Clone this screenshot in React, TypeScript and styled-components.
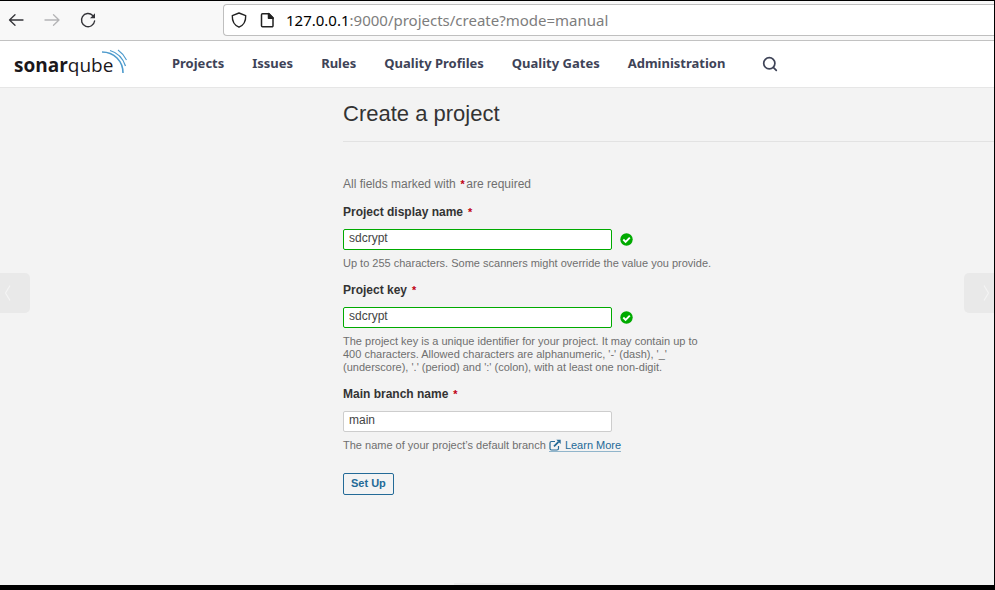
import React from "react";
import styled, { createGlobalStyle, css } from "styled-components";

const GlobalStyle = createGlobalStyle`
  *, *::before, *::after { box-sizing: border-box; }
  body {
    margin: 0;
    background: #f3f3f3;
    color: #333;
    font-family: "Liberation Sans", Arial, Helvetica, sans-serif;
    font-size: 12px;
  }
`;

const Window = styled.div`
  position: relative;
  display: flex;
  flex-direction: column;
  min-height: 100vh;
  border: 0 solid #000;
  border-width: 1px 1px 5px 0;
  overflow: hidden;
`;

const BrowserBar = styled.div`
  display: flex;
  align-items: center;
  height: 40px;
  padding-bottom: 1px;
  background: #f8f8f8;
  border-bottom: 1px solid #c2c2c2;
`;

const BrowserControls = styled.div`
  display: flex;
  align-items: center;
  gap: 16px;
  width: 223px;
  padding-left: 6px;
  flex-shrink: 0;
`;

const BrowserButton = styled.button`
  display: flex;
  padding: 0;
  border: 0;
  background: none;
  color: #333338;

  &:disabled {
    color: #b4b4b6;
  }
`;

const AddressBar = styled.div`
  display: flex;
  align-items: center;
  flex: 1;
  height: 32px;
  padding-left: 6px;
  gap: 8px;
  border: 1px solid #bfbfbf;
  border-right: 0;
  border-radius: 4px 0 0 4px;
  background: #fff;
  color: #222;
`;

const Address = styled.span`
  font-family: "Noto Sans", sans-serif;
  font-size: 15px;
  line-height: 20px;
  color: #7d7d7d;
`;

const Host = styled.span`
  color: #000;
`;

const Header = styled.header`
  display: flex;
  align-items: center;
  height: 47px;
  padding-left: 14px;
  background: #fff;
  border-bottom: 1px solid #e6e6e6;
`;

const LogoLink = styled.a`
  display: flex;
  width: 158px;
  flex-shrink: 0;
  text-decoration: none;
`;

const Nav = styled.nav`
  display: flex;
  gap: 28px;
  padding-bottom: 3px;
`;

const NavLink = styled.a`
  color: #3e4357;
  font: bold 13px/20px "Noto Sans", sans-serif;
  text-decoration: none;
  white-space: nowrap;
`;

const SearchButton = styled.button`
  display: flex;
  margin-left: 36px;
  padding: 0;
  border: 0;
  background: none;
  color: #3e4357;
`;

const Main = styled.main`
  flex: 1;
  padding: 11px 0 24px 343px;
`;

const TitleBar = styled.div`
  height: 43px;
  border-bottom: 1px solid #e2e2e2;
`;

const Title = styled.h1`
  margin: 0;
  font-size: 22px;
  font-weight: 400;
  line-height: 30px;
`;

const Form = styled.form`
  max-width: 374px;
  padding-top: 34px;
`;

const Note = styled.p`
  margin: 0 0 12px;
  color: #6f6f6f;
  line-height: 16px;
`;

const Asterisk = styled.em`
  padding: 0 2px 0 1px;
  color: #c00012;
  font-size: 11px;
  font-style: italic;
  font-weight: 700;
`;

const Field = styled.div`
  margin-bottom: 12px;
`;

const Label = styled.label`
  display: block;
  margin-bottom: 9px;
  font-weight: 700;
  line-height: 16px;
`;

const InputRow = styled.div`
  display: flex;
  align-items: center;
  gap: 8px;
  margin-bottom: 7px;
`;

const TextInput = styled.input<{ $valid?: boolean }>`
  width: 269px;
  height: 21px;
  padding: 0 5px 3px;
  border: 1px solid ${({ $valid }) => ($valid ? "#00aa00" : "#cdcdcd")};
  border-radius: 2px;
  background: #fff;
  color: #444;
  font: 12px "Liberation Sans", Arial, sans-serif;
  outline: 0;
`;

const Hint = styled.p`
  margin: 0;
  color: #6f6f6f;
  font-size: 11px;
  line-height: 13px;
`;

const actionColor = css`
  color: #236a97;
`;

const LearnMore = styled.a`
  ${actionColor}
  border-bottom: 1px solid #91b5cb;
  text-decoration: none;

  svg {
    margin-right: 4px;
    vertical-align: -2px;
  }
`;

const SubmitButton = styled.button`
  ${actionColor}
  height: 22px;
  margin-top: 9px;
  padding: 0 7px 3px;
  border: 1px solid #236a97;
  border-radius: 2px;
  background: transparent;
  font: bold 11px "Liberation Sans", Arial, sans-serif;
`;

const PagerButton = styled.button<{ $side: "left" | "right" }>`
  position: absolute;
  top: 272px;
  ${({ $side }) => $side}: 0;
  display: flex;
  align-items: center;
  justify-content: ${({ $side }) => ($side === "left" ? "flex-start" : "flex-end")};
  width: 30px;
  height: 40px;
  padding: 0 4px;
  border: 0;
  border-radius: ${({ $side }) => ($side === "left" ? "0 5px 5px 0" : "5px 0 0 5px")};
  background: #e9e9e9;
  color: #f4f4f4;
`;

const BottomHandle = styled.div`
  position: absolute;
  bottom: 0;
  left: 50%;
  width: 86px;
  height: 2px;
  margin-left: -43px;
  background: #ebebeb;
`;

const ArrowIcon = ({ flip }: { flip?: boolean }) => (
  <svg width="20" height="20" viewBox="0 0 20 20" fill="none" stroke="currentColor" strokeWidth="1.3" strokeLinecap="round" strokeLinejoin="round">
    <path d={flip ? "M3 10H17M11.5 4.7 17 10l-5.5 5.3" : "M17 10H3.5M9 4.7 3.5 10 9 15.3"} />
  </svg>
);

const ReloadIcon = () => (
  <svg width="20" height="20" viewBox="0 0 20 20" fill="none" stroke="currentColor" strokeWidth="1.4" strokeLinecap="round">
    <path d="M16.6 11a6.6 6.6 0 1 1-1.9-5.6l1 1" />
    <path d="M17 3.2v5h-5Z" fill="currentColor" stroke="none" />
  </svg>
);

const ShieldIcon = () => (
  <svg width="20" height="20" viewBox="0 0 20 20" fill="none" stroke="currentColor" strokeWidth="1.4" strokeLinejoin="round">
    <path d="M9 3 15.7 5.6C15.9 10.6 13.7 15.2 9 17.2 4.3 15.2 2.1 10.6 2.3 5.6Z" />
  </svg>
);

const PageIcon = () => (
  <svg width="20" height="20" viewBox="0 0 20 20" fill="none" stroke="currentColor" strokeWidth="1.5" strokeLinejoin="round">
    <path d="M4.5 3.7H11l4 4v8a1 1 0 0 1-1 1H4.500a1 1 0 0 1-1-1v-11a1 1 0 0 1 1-1Z" />
    <path d="M10.5 3.5v4.7h4.7Z" fill="currentColor" />
  </svg>
);

const Logo = () => (
  <svg width="116" height="34" viewBox="0 0 116 34" role="img" aria-label="sonarqube">
    <text x="0" y="25" fill="#1b171b" fontFamily="Open Sans, sans-serif" fontSize="19">
      <tspan fontWeight="700">sonar</tspan>
      <tspan>qube</tspan>
    </text>
    <g fill="none" stroke="#4e9bcd">
      <path d="M88 5C100 5 109 14 109 26" strokeWidth="1.6" />
      <path d="M96 3.5C103 5.5 109 11.5 111.5 19" strokeWidth="1.3" />
      <path d="M104 3C107.5 5.5 110.5 9 112.5 13" strokeWidth="1.1" />
    </g>
  </svg>
);

const SearchIcon = () => (
  <svg width="18" height="18" viewBox="0 0 18 18" fill="none" stroke="currentColor" strokeWidth="1.7" strokeLinecap="round">
    <circle cx="8.3" cy="8.3" r="5.6" />
    <path d="m12.3 12.3 3 3" />
  </svg>
);

const CheckIcon = () => (
  <svg width="13" height="13" viewBox="0 0 13 13" aria-label="Valid" role="img">
    <circle cx="6.5" cy="6.5" r="6.2" fill="#00aa00" />
    <path d="m3.3 6.500 2.300 2.300 4.200-4.200" fill="none" stroke="#fff" strokeWidth="1.9" />
  </svg>
);

const ExternalIcon = () => (
  <svg width="12" height="12" viewBox="0 0 12 12" fill="none" stroke="currentColor">
    <path d="M6 2.5H2.500a1.500 1.500 0 0 0-1.500 1.500v5.500A1.500 1.500 0 0 0 2.500 11H8a1.500 1.500 0 0 0 1.500-1.500V7" strokeWidth="1.2" />
    <path d="M5 7.3 9.5 2.8" strokeWidth="1.7" />
    <path d="M7.3.7H11.7V5.1Z" fill="currentColor" stroke="none" />
  </svg>
);

const ChevronIcon = ({ side }: { side: "left" | "right" }) => (
  <svg width="8" height="18" viewBox="0 0 8 18" fill="none" stroke="currentColor" strokeWidth="1.2">
    <path d={side === "left" ? "M6 1.5 1.5 9 6 16.5" : "M2 1.5 6.5 9 2 16.5"} />
  </svg>
);

const navItems = ["Projects", "Issues", "Rules", "Quality Profiles", "Quality Gates", "Administration"];

const Required = () => <Asterisk>*</Asterisk>;

type TextFieldProps = {
  id: string;
  label: string;
  value: string;
  valid?: boolean;
  children: React.ReactNode;
};

const TextField = ({ id, label, value, valid, children }: TextFieldProps) => (
  <Field>
    <Label htmlFor={id}>
      {label} <Required />
    </Label>
    <InputRow>
      <TextInput id={id} type="text" defaultValue={value} $valid={valid} required />
      {valid && <CheckIcon />}
    </InputRow>
    <Hint>{children}</Hint>
  </Field>
);

export default function App() {
  return (
    <Window>
      <GlobalStyle />
      <BrowserBar>
        <BrowserControls>
          <BrowserButton type="button" aria-label="Back"><ArrowIcon /></BrowserButton>
          <BrowserButton type="button" aria-label="Forward" disabled><ArrowIcon flip /></BrowserButton>
          <BrowserButton type="button" aria-label="Reload"><ReloadIcon /></BrowserButton>
        </BrowserControls>
        <AddressBar>
          <ShieldIcon />
          <PageIcon />
          <Address>
            <Host>127.0.0.1</Host>:9000/projects/create?mode=manual
          </Address>
        </AddressBar>
      </BrowserBar>
      <Header>
        <LogoLink href="#"><Logo /></LogoLink>
        <Nav>
          {navItems.map((item) => (
            <NavLink key={item} href="#">{item}</NavLink>
          ))}
        </Nav>
        <SearchButton type="button" aria-label="Search"><SearchIcon /></SearchButton>
      </Header>
      <Main>
        <TitleBar>
          <Title>Create a project</Title>
        </TitleBar>
        <Form onSubmit={(event) => event.preventDefault()}>
          <Note>
            All fields marked with <Required />are required
          </Note>
          <TextField id="name" label="Project display name" value="sdcrypt" valid>
            Up to 255 characters. Some scanners might override the value you provide.
          </TextField>
          <TextField id="key" label="Project key" value="sdcrypt" valid>
            The project key is a unique identifier for your project. It may contain up to 400 characters. Allowed
            characters are alphanumeric, '-' (dash), '_' (underscore), '.' (period) and ':' (colon), with at least one
            non-digit.
          </TextField>
          <TextField id="branch" label="Main branch name" value="main">
            The name of your project’s default branch{" "}
            <LearnMore href="#"><ExternalIcon />Learn More</LearnMore>
          </TextField>
          <SubmitButton type="submit">Set Up</SubmitButton>
        </Form>
      </Main>
      <PagerButton type="button" $side="left" aria-label="Previous"><ChevronIcon side="left" /></PagerButton>
      <PagerButton type="button" $side="right" aria-label="Next"><ChevronIcon side="right" /></PagerButton>
      <BottomHandle />
    </Window>
  );
}
